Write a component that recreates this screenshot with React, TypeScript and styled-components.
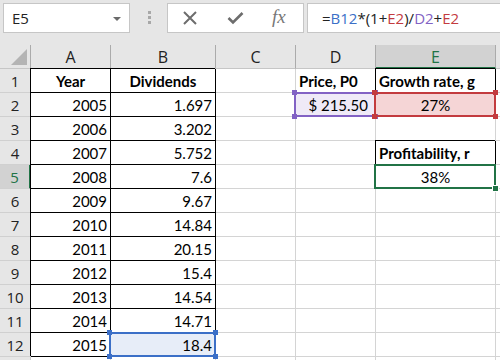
import React from 'react'
import styled, { createGlobalStyle, css } from 'styled-components'

const GREEN = '#217346'
const GRID = '#d4d4d4'
const BLUE = '#3b6fc7'
const RED = '#c33b3f'
const PURPLE = '#8262c4'

const GlobalStyle = createGlobalStyle`
  html, body {
    margin: 0;
    padding: 0;
    background: #ffffff;
    overflow: hidden;
  }
  * {
    box-sizing: border-box;
  }
`

const Page = styled.div`
  width: 500px;
  height: 360px;
  overflow: hidden;
  background: #ffffff;
`

const Toolbar = styled.div`
  height: 45px;
  background: #e6e6e6;
  display: flex;
  align-items: flex-start;
  padding: 3px 0 0 3px;
  font-family: "Open Sans", "Noto Sans", sans-serif;
  overflow: hidden;
`

const Field = styled.div<{ $w?: number; $gap?: number }>`
  height: 30px;
  margin-left: ${p => p.$gap || 0}px;
  background: #ffffff;
  border: 1px solid #c6c6c6;
  display: flex;
  align-items: center;
  flex: ${p => (p.$w ? `0 0 ${p.$w}px` : '1 0 auto')};
`

const NameBox = styled(Field)`
  justify-content: space-between;
  padding: 0 8px 0 8px;
  font-size: 15px;
  color: #222;
`

const DropArrow = styled.span`
  width: 0;
  height: 0;
  border-left: 4px solid transparent;
  border-right: 4px solid transparent;
  border-top: 4px solid #6a6a6a;
  margin-top: 1px;
`

const Grip = styled.div`
  margin: 8px 0 0 18px;
  display: flex;
  flex-direction: column;
  gap: 2px;
  span {
    width: 3px;
    height: 3px;
    background: #a8a8a8;
  }
`

const ActionBox = styled(Field)`
  padding-left: 15px;
`

const IconSlot = styled.span<{ $w: number }>`
  width: ${p => p.$w}px;
  display: flex;
  align-items: center;
`

const Fx = styled.span`
  font-family: "Liberation Serif", "DejaVu Serif", serif;
  font-style: italic;
  font-size: 19px;
  color: #777;
  margin-top: -2px;
`

const Formula = styled(Field)`
  margin-right: -20px;
  padding-left: 14px;
  font-size: 15px;
  color: #222;
  white-space: nowrap;
`

const Ref = styled.span<{ $c: string }>`
  color: ${p => p.$c};
`

const Sheet = styled.div`
  display: grid;
  grid-template-columns: 31px 80px 105px 80px 80px 120px 1fr;
  grid-auto-rows: 24px;
`

const headBase = css`
  background: #e6e6e6;
  display: flex;
  align-items: center;
  justify-content: center;
  font-family: "Open Sans", "Noto Sans", sans-serif;
  font-size: 16px;
  color: #222;
`

const Corner = styled.div`
  ${headBase};
  border-right: 1px solid #ababab;
  border-bottom: 1px solid #c6c6c6;
  align-items: flex-end;
  justify-content: flex-end;
  padding: 0 3px 3px 0;
`

const ColHead = styled.div<{ $active?: boolean }>`
  ${headBase};
  border-right: 1px solid #ababab;
  border-bottom: ${p => (p.$active ? `2px solid ${GREEN}` : '1px solid #c6c6c6')};
  padding-top: ${p => (p.$active ? 1 : 0)}px;
  background: ${p => (p.$active ? '#d2d2d2' : '#e6e6e6')};
  color: ${p => (p.$active ? GREEN : '#222')};
`

const RowHead = styled.div<{ $active?: boolean }>`
  ${headBase};
  font-size: 15px;
  border-right: ${p => (p.$active ? `2px solid ${GREEN}` : '1px solid #c6c6c6')};
  border-bottom: 1px solid #d0d0d0;
  background: ${p => (p.$active ? '#d2d2d2' : '#e6e6e6')};
  color: ${p => (p.$active ? GREEN : '#222')};
`

type Align = 'left' | 'center' | 'right'

const Cell = styled.div<{ $align?: Align; $bold?: boolean; $boxed?: boolean; $fill?: string; $pr?: number }>`
  position: relative;
  display: flex;
  align-items: center;
  justify-content: ${p => (p.$align === 'center' ? 'center' : p.$align === 'right' ? 'flex-end' : 'flex-start')};
  padding: 0 ${p => p.$pr ?? 3}px 0 3px;
  border-right: 1px solid ${p => (p.$boxed ? '#000' : GRID)};
  border-bottom: 1px solid ${p => (p.$boxed ? '#000' : GRID)};
  box-shadow: ${p => (p.$boxed ? '-1px -1px 0 #000' : 'none')};
  background: ${p => p.$fill || '#ffffff'};
  font-family: Lato, "Open Sans", sans-serif;
  font-size: 15px;
  line-height: 18px;
  font-weight: ${p => (p.$bold ? 700 : 400)};
  color: #000;
  white-space: nowrap;
`

const Frame = styled.span<{ $c: string }>`
  position: absolute;
  z-index: 2;
  top: -1px;
  left: -2px;
  right: -1px;
  bottom: -1px;
  border: 2px solid ${p => p.$c};
  pointer-events: none;
`

const Handle = styled.span<{ $c: string; $v: 'top' | 'bottom'; $h: 'left' | 'right' }>`
  position: absolute;
  width: 5px;
  height: 5px;
  background: ${p => p.$c};
  ${p => p.$v}: -4px;
  ${p => p.$h}: -4px;
`

const FillHandle = styled.span`
  position: absolute;
  right: -5px;
  bottom: -5px;
  width: 7px;
  height: 7px;
  background: ${GREEN};
  border: 1px solid #ffffff;
`

function RefBox({ color }: { color: string }) {
  return (
    <Frame $c={color}>
      <Handle $c={color} $v="top" $h="left" />
      <Handle $c={color} $v="top" $h="right" />
      <Handle $c={color} $v="bottom" $h="left" />
      <Handle $c={color} $v="bottom" $h="right" />
    </Frame>
  )
}

const dividends: [string, string][] = [
  ['2005', '1.697'],
  ['2006', '3.202'],
  ['2007', '5.752'],
  ['2008', '7.6'],
  ['2009', '9.67'],
  ['2010', '14.84'],
  ['2011', '20.15'],
  ['2012', '15.4'],
  ['2013', '14.54'],
  ['2014', '14.71'],
  ['2015', '18.4'],
]

const columns = ['A', 'B', 'C', 'D', 'E', '']

function App() {
  return (
    <Page>
      <GlobalStyle />
      <Toolbar>
        <NameBox $w={127}>
          <span>E5</span>
          <DropArrow />
        </NameBox>
        <Grip>
          <span />
          <span />
          <span />
        </Grip>
        <ActionBox $w={137} $gap={16}>
          <IconSlot $w={44}>
            <svg width="14" height="14" viewBox="0 0 14 14">
              <path d="M1 1 L13 13 M13 1 L1 13" stroke="#6d6d6d" strokeWidth="2" fill="none" />
            </svg>
          </IconSlot>
          <IconSlot $w={45}>
            <svg width="17" height="14" viewBox="0 0 17 14">
              <path d="M1.5 7 L6 11.5 L15.5 2" stroke="#6d6d6d" strokeWidth="2.6" fill="none" />
            </svg>
          </IconSlot>
          <IconSlot $w={20}>
            <Fx>fx</Fx>
          </IconSlot>
        </ActionBox>
        <Formula $gap={3}>
          =<Ref $c={BLUE}>B12</Ref>*(1+<Ref $c={RED}>E2</Ref>)/<Ref $c={PURPLE}>D2</Ref>+<Ref $c={RED}>E2</Ref>
        </Formula>
      </Toolbar>

      <Sheet>
        <Corner>
          <svg width="16" height="16" viewBox="0 0 16 16">
            <polygon points="16,0 16,16 0,16" fill="#b4b4b4" />
          </svg>
        </Corner>
        {columns.map((c, i) => (
          <ColHead key={i} $active={c === 'E'}>
            {c}
          </ColHead>
        ))}

        <RowHead>1</RowHead>
        <Cell $boxed $bold $align="center">Year</Cell>
        <Cell $boxed $bold $align="center">Dividends</Cell>
        <Cell />
        <Cell $bold>Price, P0</Cell>
        <Cell $boxed $bold>Growth rate, g</Cell>
        <Cell />

        {dividends.map(([year, value], i) => {
          const row = i + 2
          return (
            <React.Fragment key={year}>
              <RowHead $active={row === 5}>{row}</RowHead>
              <Cell $boxed $align="right">{year}</Cell>
              <Cell $boxed $align="right" $fill={row === 12 ? '#e7edf8' : undefined}>
                {value}
                {row === 12 && <RefBox color={BLUE} />}
              </Cell>
              <Cell />
              {row === 2 ? (
                <Cell $align="right" $pr={7} $fill="#efeaf7">
                  $ 215.50
                  <RefBox color={PURPLE} />
                </Cell>
              ) : (
                <Cell />
              )}
              {row === 2 ? (
                <Cell $boxed $align="center" $fill="#f5d5d6">
                  27%
                  <RefBox color={RED} />
                </Cell>
              ) : row === 4 ? (
                <Cell $boxed $bold>Profitability, r</Cell>
              ) : row === 5 ? (
                <Cell $boxed $align="center">
                  38%
                  <Frame $c={GREEN}>
                    <FillHandle />
                  </Frame>
                </Cell>
              ) : (
                <Cell />
              )}
              <Cell />
            </React.Fragment>
          )
        })}

        {/* row 13 only peeks in at the bottom edge */}
        <RowHead />
        <Cell />
        <Cell />
        <Cell />
        <Cell />
        <Cell />
        <Cell />
      </Sheet>
    </Page>
  )
}

export default App
